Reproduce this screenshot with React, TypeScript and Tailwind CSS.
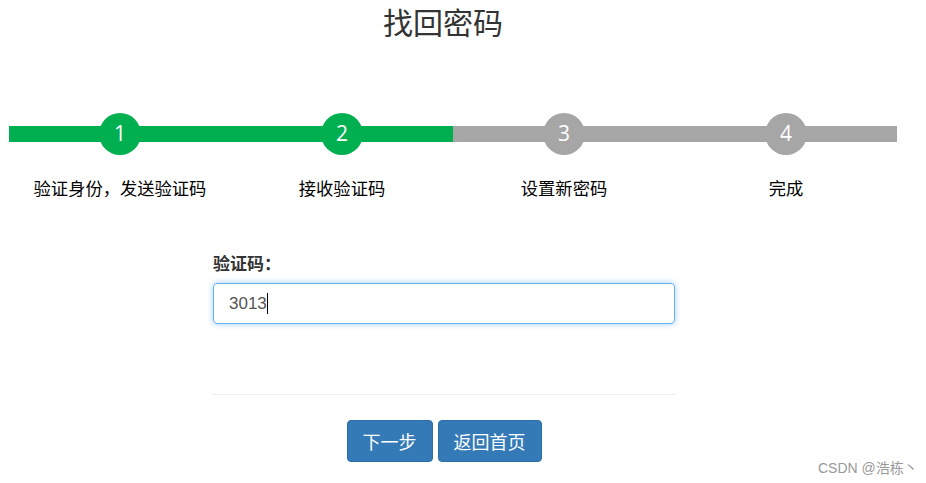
import React from "react";

const steps = [
  { n: 1, label: "验证身份，发送验证码", done: true },
  { n: 2, label: "接收验证码", done: true },
  { n: 3, label: "设置新密码", done: false },
  { n: 4, label: "完成", done: false },
];

export default function App() {
  return (
    <div
      className="relative w-[926px] h-[483px] bg-white overflow-hidden"
      style={{ fontFamily: '"Noto Sans CJK SC", "Noto Sans", sans-serif' }}
    >
      <div className="pl-[9px] w-[897px]">
        <div className="w-[868px] h-[42px] text-center text-[30px] leading-[42px] text-[#333]">
          找回密码
        </div>

        <div className="mt-[71px] flex w-[888px]">
          {steps.map((s) => (
            <div key={s.n} className="flex-1 flex flex-col items-center">
              <div
                className={
                  s.done
                    ? "w-full h-[42px] flex justify-center bg-[linear-gradient(to_bottom,transparent_13px,#00af50_13px,#00af50_29px,transparent_29px)]"
                    : "w-full h-[42px] flex justify-center bg-[linear-gradient(to_bottom,transparent_13px,#a6a6a6_13px,#a6a6a6_29px,transparent_29px)]"
                }
              >
                <div
                  className={
                    (s.done ? "bg-[#00af50]" : "bg-[#a6a6a6]") +
                    " w-[42px] h-[42px] rounded-full flex items-center justify-center text-white text-[21px]"
                  }
                  style={{ fontFamily: '"Open Sans", "Noto Sans", sans-serif' }}
                >
                  {s.n}
                </div>
              </div>
              <div className="mt-[21px] text-[17.3px] leading-[24px] text-black whitespace-nowrap">
                {s.label}
              </div>
            </div>
          ))}
        </div>

        <div className="w-[870px] flex justify-center">
          <div className="w-[462px] mt-[52px]">
            <div className="text-[17px] leading-[22px] font-bold text-[#333]">验证码：</div>
            <div className="mt-[9px] h-[41px] rounded-[4px] border border-[#66afe9] shadow-[0_0_6px_rgba(102,175,233,0.6)] flex items-center px-[15px]">
              <span
                className="text-[17px] text-[#555]"
                style={{ fontFamily: '"Liberation Sans", Arial, sans-serif' }}
              >
                3013
              </span>
              <span className="w-px h-[21px] bg-black"></span>
            </div>
            <div className="mt-[70px] h-px bg-[#eee]"></div>
            <div className="mt-[25px] flex justify-center gap-[5px]">
              <button className="h-[42px] px-[15px] rounded-[4px] bg-[#337ab7] border border-[#2e6da4] text-white text-[18px] leading-[24px]">
                下一步
              </button>
              <button className="h-[42px] px-[15px] rounded-[4px] bg-[#337ab7] border border-[#2e6da4] text-white text-[18px] leading-[24px]">
                返回首页
              </button>
            </div>
          </div>
        </div>
      </div>

      <div className="absolute left-[818px] top-[457px] text-[14px] leading-[20px] text-[#999]">
        <span style={{ fontFamily: '"Liberation Sans", Arial, sans-serif' }}>CSDN @</span>浩栋丶
      </div>
    </div>
  );
}
